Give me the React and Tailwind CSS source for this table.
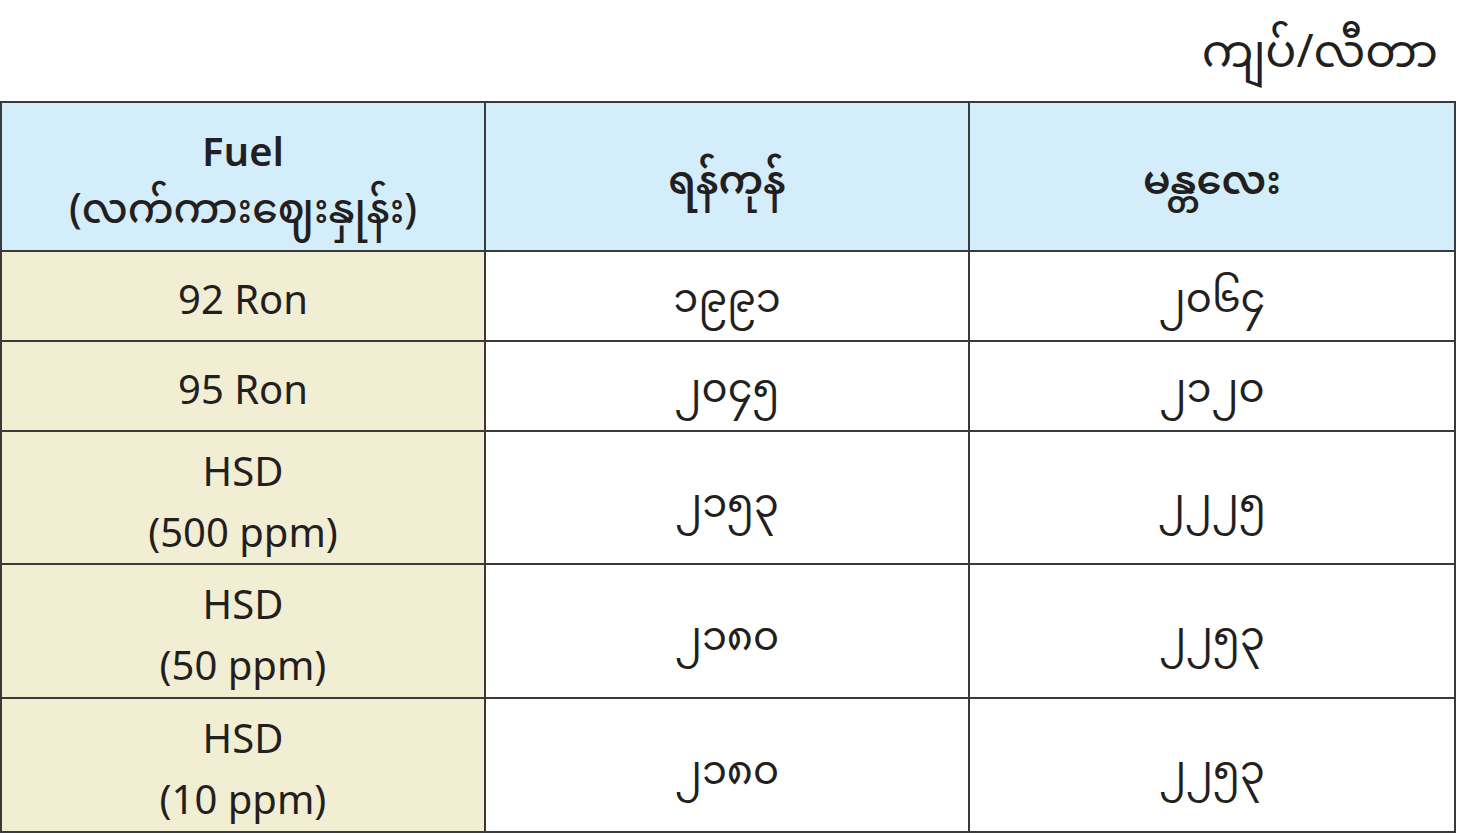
const rows = [
  { fuel: ['92 Ron'], ygn: '၁၉၉၁', mdy: '၂၀၆၄', tall: false },
  { fuel: ['95 Ron'], ygn: '၂၀၄၅', mdy: '၂၁၂၀', tall: false },
  { fuel: ['HSD', '(500 ppm)'], ygn: '၂၁၅၃', mdy: '၂၂၂၅', tall: true },
  { fuel: ['HSD', '(50 ppm)'], ygn: '၂၁၈၀', mdy: '၂၂၅၃', tall: true },
  { fuel: ['HSD', '(10 ppm)'], ygn: '၂၁၈၀', mdy: '၂၂၅၃', tall: true },
];

const font = "font-['Noto_Sans_Myanmar','Noto_Sans','Padauk','Myanmar_Text',sans-serif]";
const cell = 'border-r-2 border-b-2 border-[#3a3a3a] flex flex-col items-center justify-center text-[40px]';

export default function App() {
  return (
    <div className={`w-[1459px] h-[835px] bg-white text-[#231f20] ${font}`}>
      <div className="h-[101px] flex items-center justify-end pr-[21px] pt-[12px] text-[46px]">
        ကျပ်/လီတာ
      </div>
      <div className="w-[1456px] grid grid-cols-[484px_484px_486px] grid-rows-[149px_90px_90px_133px_134px_134px] border-t-2 border-l-2 border-[#3a3a3a]">
        <div className={`${cell} bg-[#d3edfb] font-semibold leading-[58px]`}>
          <div className="translate-y-[9px]">Fuel</div>
          <div className="translate-y-[8px] font-medium text-[41px]">(လက်ကားဈေးနှုန်း)</div>
        </div>
        <div className={`${cell} bg-[#d3edfb] font-semibold`}>
          <span className="translate-y-[8px]">ရန်ကုန်</span>
        </div>
        <div className={`${cell} bg-[#d3edfb] font-semibold`}>
          <span className="translate-y-[8px]">မန္တလေး</span>
        </div>
        {rows.map((r, i) => (
          <div key={i} className="contents">
            <div className={`${cell} bg-[#f2eed3] leading-[61px]`}>
              {r.fuel.map((f) => (
                <div key={f} className={r.tall ? 'translate-y-[9px]' : 'translate-y-[8px]'}>
                  {f}
                </div>
              ))}
            </div>
            <div className={cell}>
              <span className={r.tall ? 'translate-y-[10px]' : 'translate-y-[7px]'}>{r.ygn}</span>
            </div>
            <div className={cell}>
              <span className={r.tall ? 'translate-y-[10px]' : 'translate-y-[7px]'}>{r.mdy}</span>
            </div>
          </div>
        ))}
      </div>
    </div>
  );
}
